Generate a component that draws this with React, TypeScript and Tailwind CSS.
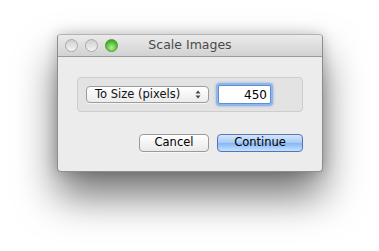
export default function App() {
  return (
    <div className="w-[379px] h-[251px] bg-white overflow-hidden pt-[34px] pl-[57px] font-['DejaVu_Sans',sans-serif]">
      {/* Window */}
      <div className="w-[266px] h-[138px] flex flex-col rounded-[4px] bg-[#ececec] border border-[#8d8d8d] border-t-[#b4b4b4] shadow-[0_24px_40px_rgba(0,0,0,0.55),0_0_14px_rgba(0,0,0,0.2)] overflow-hidden">
        {/* Title bar */}
        <div className="h-[22px] shrink-0 flex items-center relative bg-gradient-to-b from-[#ebebeb] to-[#d2d2d2] border-b border-[#9a9a9a]">
          <div className="absolute left-[7px] top-[4px] flex gap-[7px]">
            <span className="w-[13px] h-[13px] rounded-full border border-[#a9a9a9] bg-gradient-to-b from-[#cfcfcf] to-[#f4f4f4]" />
            <span className="w-[13px] h-[13px] rounded-full border border-[#a9a9a9] bg-gradient-to-b from-[#cfcfcf] to-[#f4f4f4]" />
            <span className="w-[13px] h-[13px] rounded-full border border-[#4f9b3c] bg-[radial-gradient(circle_at_50%_70%,#b6f08e,#4fbb36_60%,#2f8a22)]" />
          </div>
          <div className="flex-1 text-center text-[12.5px] text-[#4a4a4a] leading-none">
            Scale Images
          </div>
        </div>

        {/* Body */}
        <div className="flex-1 flex flex-col px-[19px] pt-[20px]">
          <div className="h-[35px] rounded-[4px] border border-[#cdcdcd] bg-[#e3e3e3] flex items-center pl-[8px] gap-[9px]">
            <div className="w-[123px] h-[17px] rounded-[4px] border border-[#9c9c9c] bg-gradient-to-b from-[#ffffff] to-[#ececec] flex items-center pl-[8px] pr-[7px] shadow-[0_1px_0_rgba(255,255,255,0.6)]">
              <span className="flex-1 text-[11.5px] text-[#111] leading-none">To Size (pixels)</span>
              <svg width="6" height="9" viewBox="0 0 6 9">
                <path d="M3 0.5 L5.5 3.5 H0.5 Z" fill="#444" />
                <path d="M3 8.5 L5.5 5.5 H0.5 Z" fill="#444" />
              </svg>
            </div>
            <div className="w-[53px] h-[19px] border border-[#5d8fd6] rounded-[2px] bg-white shadow-[0_0_0_2px_#8fb6ea,0_0_3px_2px_rgba(95,145,220,0.6)] flex items-center justify-end pr-[3px] text-[12px] text-black leading-none">
              450
            </div>
          </div>

          <div className="flex justify-end gap-[8px] mt-[22px]">
            <button className="w-[70px] h-[18px] rounded-[4px] border border-[#9a9a9a] bg-gradient-to-b from-[#ffffff] to-[#e9e9e9] text-[11.5px] text-black leading-none shadow-[0_1px_0_rgba(255,255,255,0.6)]">
              Cancel
            </button>
            <button className="w-[86px] h-[18px] rounded-[4px] border border-[#5a73b5] bg-[linear-gradient(to_bottom,#d6e6fb_0%,#a5c9f5_50%,#86b6f4_51%,#c4e2ff_100%)] text-[11.5px] text-black leading-none">
              Continue
            </button>
          </div>
        </div>
      </div>
    </div>
  );
}
